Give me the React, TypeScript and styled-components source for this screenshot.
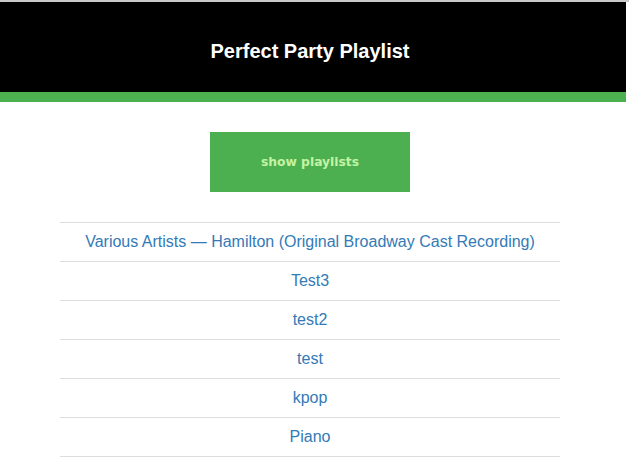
import React from "react";
import styled, { createGlobalStyle } from "styled-components";

const Global = createGlobalStyle`
  html, body { margin: 0; padding: 0; background: #fff; }
  body { font-family: "Liberation Sans", Arial, sans-serif; }
`;

const TopRule = styled.div`
  height: 2px;
  background: #c9c9c9;
`;

const Header = styled.header`
  width: 626px;
  height: 100px;
  box-sizing: border-box;
  background: #000;
  border-bottom: 10px solid #4caf50;
  display: flex;
  align-items: center;
  justify-content: center;
  padding-right: 6px;
`;

const Title = styled.h1`
  margin: 0;
  padding-top: 8px;
  color: #fff;
  font-family: "Liberation Sans", Arial, sans-serif;
  font-weight: bold;
  font-size: 20px;
`;

const Main = styled.main`
  width: 620px;
  display: flex;
  flex-direction: column;
  align-items: center;
  padding-top: 30px;
`;

const ShowButton = styled.button`
  width: 200px;
  height: 60px;
  border: none;
  background: #4caf50;
  color: #c4f3a4;
  font-family: "DejaVu Sans", Verdana, sans-serif;
  font-weight: bold;
  font-size: 12.3px;
  cursor: pointer;
`;

const List = styled.ul`
  list-style: none;
  margin: 30px 0 0;
  padding: 0;
  width: 500px;
  border-bottom: 1px solid #dddddd;
`;

const Item = styled.li`
  height: 38px;
  border-top: 1px solid #dddddd;
  display: flex;
  align-items: center;
  justify-content: center;
`;

const Link = styled.a`
  color: #337ab7;
  font-size: 16px;
  text-decoration: none;
`;

const playlists = [
  "Various Artists \u2014 Hamilton (Original Broadway Cast Recording)",
  "Test3",
  "test2",
  "test",
  "kpop",
  "Piano",
];

export default function App() {
  return (
    <>
      <Global />
      <TopRule />
      <Header>
        <Title>Perfect Party Playlist</Title>
      </Header>
      <Main>
        <ShowButton>show playlists</ShowButton>
        <List>
          {playlists.map((p) => (
            <Item key={p}>
              <Link href="#">{p}</Link>
            </Item>
          ))}
        </List>
      </Main>
    </>
  );
}
